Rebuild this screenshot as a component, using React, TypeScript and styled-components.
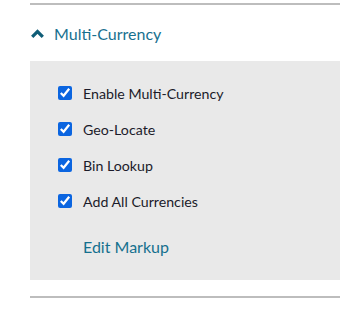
import React from "react";
import styled, {createGlobalStyle} from "styled-components";

const GlobalStyle = createGlobalStyle`
  body {
    margin: 0;
    background: #fff;
    font-family: Lato, "Open Sans", sans-serif;
  }
`;

const Section = styled.section`
  width: 310px;
  margin-left: 30px;
  padding-top: 3px;
`;

const Rule = styled.hr`
  margin: 0;
  border: none;
  height: 2px;
  background: #bdbdbd;
`;

const Header = styled.button`
  display: flex;
  align-items: center;
  gap: 10px;
  width: 100%;
  height: 56px;
  padding: 0 0 0 1px;
  border: none;
  background: none;
  cursor: pointer;
  font-family: inherit;
  font-size: 16px;
  color: #17708f;
`;

const Panel = styled.div`
  background: #e9e9e9;
  padding: 22px 0 22px 28px;
  height: 219px;
  box-sizing: border-box;
`;

const Options = styled.div`
  display: flex;
  flex-direction: column;
  gap: 16px;
`;

const Option = styled.label`
  display: flex;
  align-items: center;
  gap: 11px;
  height: 20px;
  font-size: 14.2px;
  color: #1b1b2a;

  input {
    width: 14px;
    height: 14px;
    margin: 0;
    accent-color: #0b65e0;
  }
`;

const EditLink = styled.a`
  display: inline-block;
  margin: 26px 0 0 25px;
  font-size: 16px;
  color: #15708e;
  text-decoration: none;
  cursor: pointer;
`;

const Footer = styled.div`
  margin-top: 16px;
`;

const Chevron = () => (
    <svg width="13" height="9" viewBox="0 0 13 9">
        <path d="M1.2 7.8 L6.5 2.5 L11.8 7.8" fill="none" stroke="#0f5d77" strokeWidth="3.2" />
    </svg>
);

const options = ["Enable Multi-Currency", "Geo-Locate", "Bin Lookup", "Add All Currencies"];

const App = () => (
    <>
        <GlobalStyle />
        <Section>
            <Rule />
            <Header>
                <Chevron />
                <span>Multi-Currency</span>
            </Header>
            <Panel>
                <Options>
                    {options.map(o => (
                        <Option key={o}>
                            <input type="checkbox" defaultChecked />
                            <span>{o}</span>
                        </Option>
                    ))}
                </Options>
                <EditLink>Edit Markup</EditLink>
            </Panel>
            <Footer>
                <Rule />
            </Footer>
        </Section>
    </>
);

export default App;
